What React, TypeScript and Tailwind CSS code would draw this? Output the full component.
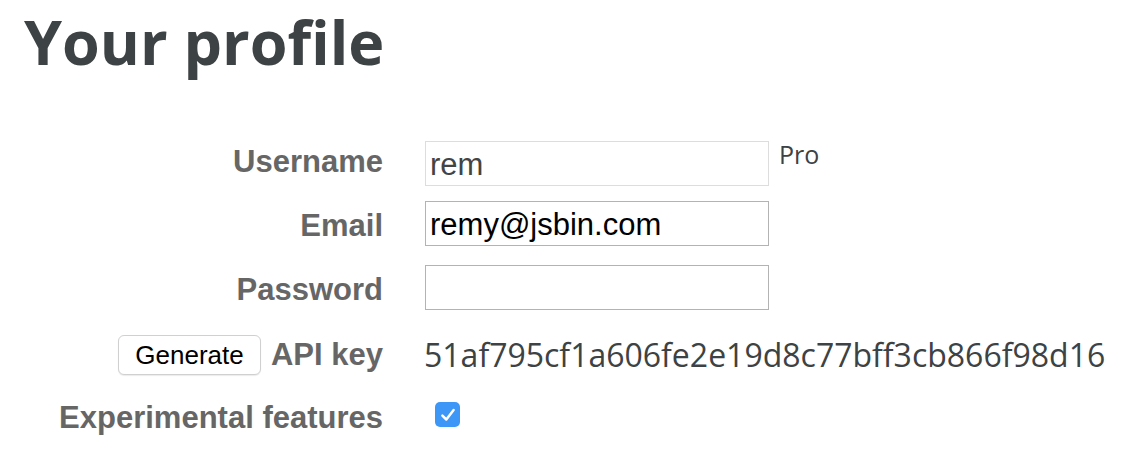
import React from 'react';

const label = "w-[383px] shrink-0 text-right font-['Liberation_Sans',Arial,sans-serif] font-bold text-[31px] text-[#666666]";
const open = "font-['Open_Sans',sans-serif]";

export default function App() {
  return (
    <div className="w-[1128px] h-[454px] bg-white overflow-hidden">
      {/* Heading */}
      <h1 className={`${open} ml-[24px] pt-[4px] text-[61px] leading-[76px] font-bold text-[#3d4244]`}>
        Your profile
      </h1>

      <div className="mt-[61px] flex flex-col">
        {/* Username */}
        <div className="flex h-[45px] items-center gap-[42px]">
          <div className={`${label} -mt-[3px]`}>Username</div>
          <div className="flex self-stretch">
            <input
              readOnly
              defaultValue="rem"
              className="w-[344px] h-[45px] border border-[#dddddd] px-[4px] pt-[3px] font-['Liberation_Sans',Arial,sans-serif] text-[31px] text-[#444444] outline-none"
            />
            <span className={`${open} ml-[10px] -mt-[4px] text-[25px] leading-[34px] text-[#3d4244]`}>Pro</span>
          </div>
        </div>

        {/* Email */}
        <div className="mt-[15px] flex h-[45px] items-center gap-[42px]">
          <div className={`${label} mt-[5px]`}>Email</div>
          <input
            defaultValue="remy@jsbin.com"
            className="w-[344px] h-[45px] border border-[#b3b3b3] px-[4px] pt-[3px] font-['Liberation_Sans',Arial,sans-serif] text-[31px] text-black outline-none"
          />
        </div>

        {/* Password */}
        <div className="mt-[19px] flex h-[45px] items-center gap-[42px]">
          <div className={`${label} mt-[5px]`}>Password</div>
          <input
            type="password"
            className="w-[344px] h-[45px] border border-[#b3b3b3] px-[4px] outline-none"
          />
        </div>

        {/* API key */}
        <div className="mt-[25px] flex h-[40px] items-center gap-[41px]">
          <div className="w-[383px] shrink-0 flex items-center justify-end gap-[10px]">
            <button className="w-[143px] h-[40px] rounded-[6px] border border-[#d0d0d0] bg-white font-['Liberation_Sans',Arial,sans-serif] text-[26px] text-black shadow-[0_1px_1px_rgba(0,0,0,0.08)]">
              Generate
            </button>
            <span className="font-['Liberation_Sans',Arial,sans-serif] font-bold text-[31px] text-[#666666]">API key</span>
          </div>
          <span className={`${open} text-[32px] text-[#3d4244]`}>51af795cf1a606fe2e19d8c77bff3cb866f98d16</span>
        </div>

        {/* Experimental features */}
        <div className="mt-[27px] flex h-[25px] items-center gap-[52px]">
          <div className={`${label} mt-[7px]`}>Experimental features</div>
          <div className="w-[25px] h-[25px] rounded-[5px] bg-[#3d97f7] flex items-center justify-center">
            <svg width="18" height="18" viewBox="0 0 16 16" fill="none">
              <path d="M3 8.5 L6.5 12 L13 3.5" stroke="white" strokeWidth="2.2" strokeLinecap="round" strokeLinejoin="round" />
            </svg>
          </div>
        </div>
      </div>
    </div>
  );
}
